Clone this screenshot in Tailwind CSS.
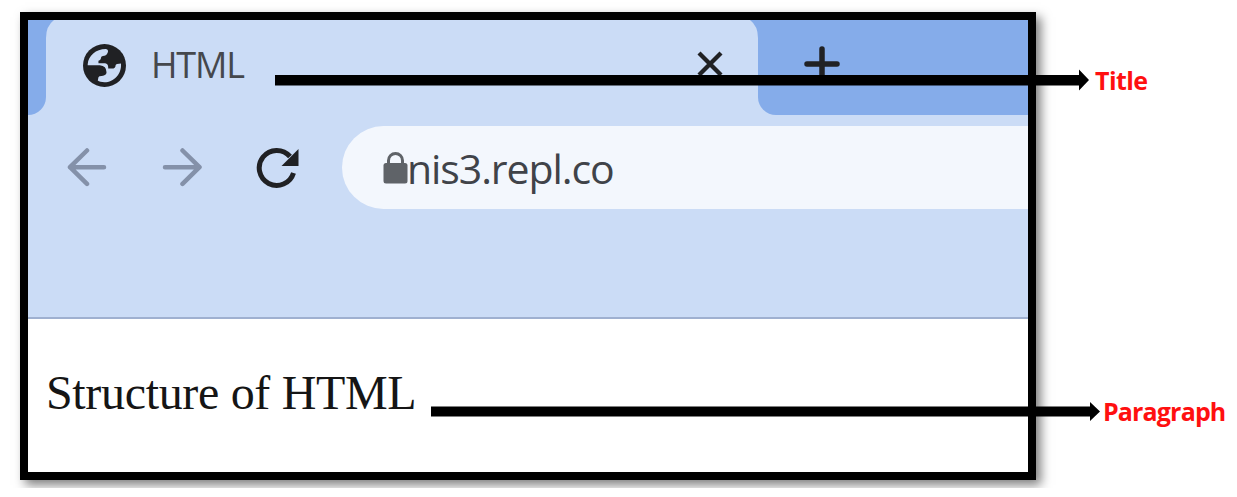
<!DOCTYPE html>
<html lang="en">
<head>
<meta charset="utf-8">
<title>HTML</title>
<script src="https://cdn.jsdelivr.net/npm/@tailwindcss/browser@4"></script>
</head>
<body class="bg-white">
<main class="relative h-[497px] w-[1237px] overflow-hidden bg-white">
  <div class="h-[488px] overflow-hidden pt-[12px] pl-[20px]">
    <section class="flex h-[468px] w-[1016px] flex-col border-8 border-black bg-white shadow-[5px_5px_10px_rgba(0,0,0,0.5)]">
      <header class="flex h-[299px] shrink-0 flex-col border-b-2 border-[#9fb0d0] bg-[#cbdcf6]">
        <div class="flex h-[95px] shrink-0">
          <div class="h-full w-[18px] rounded-br-[18px] bg-[#85acea]"></div>
          <div class="relative flex h-full w-[712px] items-start">
            <svg class="absolute top-0 left-0 h-[18px] w-[8px]" viewBox="0 0 8 18"><path d="M0 0H8Q0 6 0 18Z" fill="#85acea"/></svg>
            <svg class="absolute top-0 right-0 h-[18px] w-[8px]" viewBox="0 0 8 18"><path d="M8 0H0Q8 6 8 18Z" fill="#85acea"/></svg>
            <svg class="mt-[24px] ml-[37px] size-[43px] shrink-0" viewBox="0 0 128 128"><circle cx="64" cy="64" r="64" fill="#202124"/><path fill="#cbdcf6" d="M14 60C16 35 38 15 68 15C75 16 76 22 73 27C71 33 66 36 59 36Q53 37 53 44Q52 48 46 50V57H66Q75 58 75 69V73H86Q97 73 97 63Q98 58 113 58C116 89 92 114 64 114C55 114 48 112 44 109L46 99Q47 95 56 95Q70 94 70 84Q70 65 50 63H14Z"/></svg>
            <span class="mt-[21px] ml-[25px] flex-1 font-['Open_Sans',sans-serif] text-[36px] leading-[48px] tracking-[-1.200px] text-[#45484d]">HTML</span>
            <svg class="mt-[31px] mr-[35px] size-[26px] shrink-0" viewBox="0 0 26 26" fill="none" stroke="#202124" stroke-width="4.300"><path d="M2 2L24 24M24 2L2 24"/></svg>
          </div>
          <div class="flex-1 rounded-bl-[18px] bg-[#85acea] pt-[26px] pl-[46px]">
            <svg class="size-[36px]" viewBox="0 0 36 36" fill="none" stroke="#202124" stroke-width="5.500" stroke-linecap="round"><path d="M3 18H33M18 3V33"/></svg>
          </div>
        </div>
        <div class="flex h-[105px] pt-[11px]">
          <svg class="mt-[21px] ml-[39px] h-[40px] w-[40px] shrink-0" viewBox="0 0 40 40" fill="none" stroke="#8491a9" stroke-width="4.500" stroke-linecap="round" stroke-linejoin="round"><path d="M37 20.200H3M20 3.500L3 20.200L20 36.900"/></svg>
          <svg class="mt-[21px] ml-[55px] h-[40px] w-[40px] shrink-0" viewBox="0 0 40 40" fill="none" stroke="#8491a9" stroke-width="4.500" stroke-linecap="round" stroke-linejoin="round"><path d="M3 20.200H37M20.500 3.500L37.500 20.200L20.500 36.900"/></svg>
          <svg class="mt-[21px] ml-[54px] h-[42px] w-[44px] shrink-0" viewBox="0 0 44 42"><path d="M37.500 26A17.500 17.500 0 1 1 34 9.500" fill="none" stroke="#202124" stroke-width="5"/><path d="M42.500 2V19H25.500Z" fill="#202124"/></svg>
          <div class="ml-[42px] flex h-[83px] flex-1 items-start rounded-l-full bg-[#f3f7fd] pl-[41px]">
            <svg class="mt-[26px] h-[32px] w-[25px] shrink-0" viewBox="0 0 25 32"><rect x=".5" y="11" width="24" height="20.500" rx="2.500" fill="#5f6368"/><path d="M5.500 12V8.500a7 7 0 0 1 14 0V12" fill="none" stroke="#5f6368" stroke-width="3"/></svg>
            <span class="mt-[13px] ml-[-1px] font-['Open_Sans',sans-serif] text-[41px] leading-[58px] tracking-[-1.080px] text-[#404349]">nis3.repl.co</span>
          </div>
        </div>
      </header>
      <p class="mt-[46px] pl-[18px] font-['Liberation_Serif',serif] text-[48px] leading-[56px] tracking-[-0.330px] whitespace-nowrap text-[#151515]">Structure of HTML</p>
    </section>
  </div>
  <div class="absolute top-[65px] left-[275px] flex items-center">
    <svg class="h-[30px] w-[815px]" viewBox="0 0 815 30"><path d="M0 10H804V4.500L814 15L804 25.500V20.500H0Z"/></svg>
    <span class="mt-[-1px] ml-[5px] font-['Open_Sans',sans-serif] text-[25px] leading-[30px] font-bold tracking-[-0.600px] text-[#ff1010]">Title</span>
  </div>
  <div class="absolute top-[396px] left-[431px] flex items-center">
    <svg class="h-[30px] w-[669px]" viewBox="0 0 669 30"><path d="M0 10.500H659V6L669 15.500L659 25V20.500H0Z"/></svg>
    <span class="mt-[-1px] ml-[3px] font-['Open_Sans',sans-serif] text-[25px] leading-[30px] font-bold tracking-[-0.850px] text-[#ff1010]">Paragraph</span>
  </div>
</main>
</body>
</html>
